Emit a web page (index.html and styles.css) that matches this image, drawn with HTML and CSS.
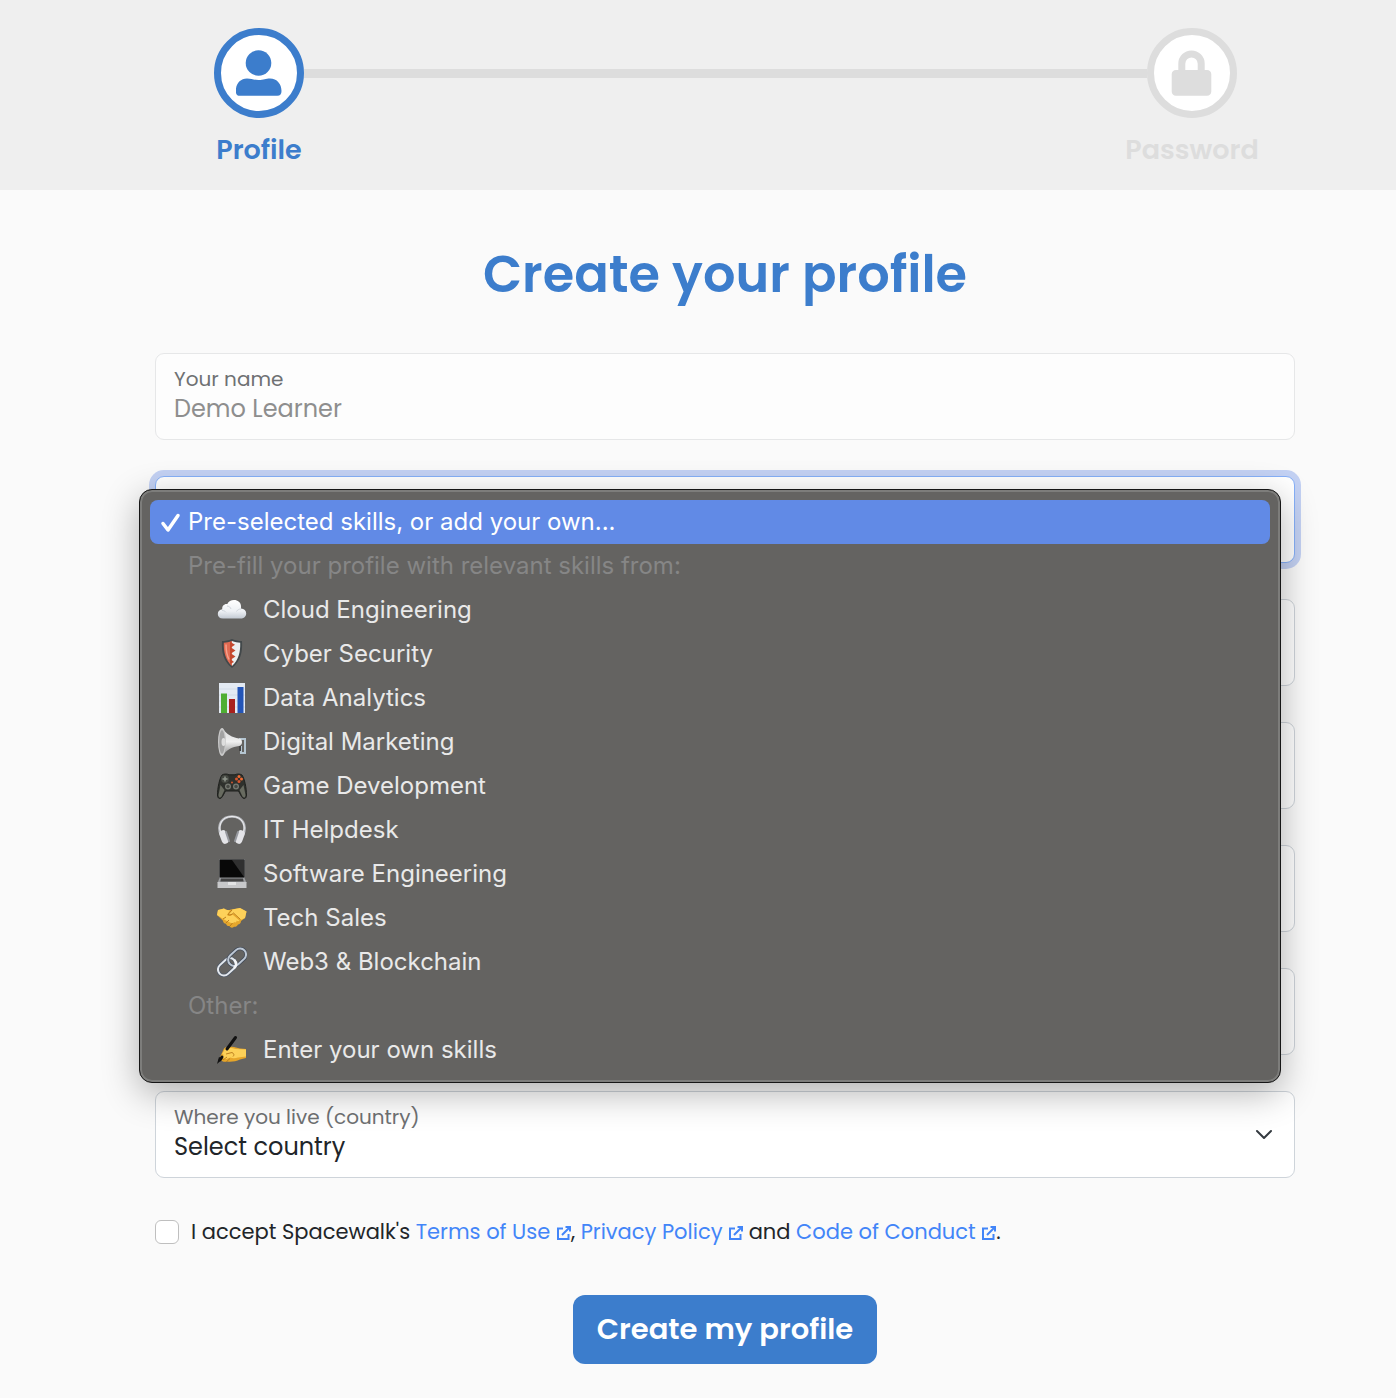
FILE: index.html
```html
<!DOCTYPE html>
<html lang="en">
<head>
    <meta charset="UTF-8">
    <meta name="viewport" content="width=device-width, initial-scale=1.0">
    <title>Create your profile</title>

    <link rel="stylesheet" href="styles.css">
</head>
<body>
    <header class="top">
        <ol class="steps">
            <li class="step active">
                <span class="step_circle">
                    <svg width="46" height="46" viewBox="0 0 46 46" fill="currentColor">
                        <circle cx="22.500" cy="13" r="12.800"/>
                        <path d="M11 28.500c4.500 0 6 1.500 11.500 1.500S29.500 28.500 34 28.500c7 0 11.500 5.500 11.500 12.500 0 3-1.200 4.800-4.200 4.800H4C1 45.800-.2 44-.2 41 -.2 34 4 28.500 11 28.500z"/>
                    </svg>
                </span>
                <span class="step_name">Profile</span>
            </li>
            <li class="step_line" role="presentation"></li>
            <li class="step">
                <span class="step_circle">
                    <svg width="46" height="46" viewBox="0 0 46 46" fill="currentColor">
                        <path fill-rule="evenodd" d="M7 20h2.300v-6.300a13.200 13.200 0 0 1 26.400 0V20H38c2.500 0 4.300 1.800 4.300 4.300v17.200c0 2.500-1.800 4.300-4.300 4.300H7c-2.500 0-4.300-1.800-4.300-4.300V24.300C2.700 21.800 4.500 20 7 20zm9.300 0h12.400v-6.300a6.200 6.200 0 0 0-12.400 0z"/>
                    </svg>
                </span>
                <span class="step_name">Password</span>
            </li>
        </ol>
    </header>

    <main class="content">
        <h1 class="title">Create your profile</h1>

        <form class="profile_form">
            <div class="field disabled">
                <label for="name">Your name</label>
                <input type="text" id="name" value="Demo Learner" disabled>
            </div>

            <div class="field focused">
                <select id="skills" aria-label="Skills">
                    <option>Pre-selected skills, or add your own...</option>
                </select>

                <!-- open skills list -->
                <div class="menu">
                    <button type="button" class="menu_item selected">
                        <svg class="check" width="22" height="22" viewBox="0 0 22 22" fill="none" stroke="currentColor" stroke-width="3.500" stroke-linecap="round" stroke-linejoin="round"><path d="M4 12.500l5 6.500 10-14.500"/></svg>
                        Pre-selected skills, or add your own...
                    </button>
                    <div class="menu_group">Pre-fill your profile with relevant skills from:</div>
                    <button type="button" class="menu_item sub">
                        <svg width="30" height="30" viewBox="0 0 30 30">
                            <defs><linearGradient id="cloud" x1="0" y1="0" x2="0" y2="1"><stop offset="0" stop-color="#fff"/><stop offset=".6" stop-color="#eef1f5"/><stop offset="1" stop-color="#c3cad3"/></linearGradient></defs>
                            <path fill="url(#cloud)" d="M6 23.500C2.500 23.500.8 21.500.8 19c0-2.700 2-4.500 4.500-4.700-.6-3.300 2-5.800 5-5.300C11.500 6.500 14 5 17 5c3.800 0 6.800 2.500 7 6 .1.800.1 1.600 0 2.500 3.200.2 5.200 2.300 5.200 5s-2.200 5-5.200 5z"/>
                            <path fill="none" stroke="#cfd5dc" d="M10 11c2 .2 3.500 1.200 4 3M24 14c-2 0-3.500.8-4.500 2.500M5 15.500c1.600 0 3 .5 4 1.800"/>
                        </svg>
                        Cloud Engineering
                    </button>
                    <button type="button" class="menu_item sub">
                        <svg width="30" height="30" viewBox="0 0 30 30">
                            <path fill="#42484a" d="M15 0c3.500 1.500 7 2 10 2 .8 11-1.500 20.500-10 27C6.500 22.500 4.200 13 5 2c3 0 6.500-.5 10-2z"/>
                            <path fill="#e06a52" d="M15 2c-3 1.100-5.500 1.600-8.200 1.700C6.500 13 8.500 21 15 27z"/>
                            <path fill="#eceff0" d="M15 2c3 1.100 5.500 1.600 8.200 1.700C23.500 13 21.500 21 15 27z"/>
                            <path fill="#c4492f" d="M13 2.700l5 3-4 2.800 4.500 3-4.500 3 4.500 3-4.500 3 3 2.500-4 2z"/>
                            <path fill="none" stroke="#f5a08c" stroke-width="1.500" d="M9 5.500c0 6 .8 10.500 3 15"/>
                        </svg>
                        Cyber Security
                    </button>
                    <button type="button" class="menu_item sub">
                        <svg width="30" height="30" viewBox="0 0 30 30">
                            <path fill="#e3eaf3" d="M2 0h26v30H2z"/>
                            <path stroke="#d3dce8" d="M2 6h26M2 12h26M2 18h26M2 24h26"/>
                            <path fill="#4eae32" d="M4 10.500h6V30H4z"/>
                            <path fill="#a9211e" d="M12 16h6v14h-6z"/>
                            <path fill="#2355b8" d="M20.500 4h6v26h-6z"/>
                        </svg>
                        Data Analytics
                    </button>
                    <button type="button" class="menu_item sub">
                        <svg width="30" height="30" viewBox="0 0 30 30">
                            <defs><linearGradient id="horn" x1="0" y1="0" x2="0" y2="1"><stop offset="0" stop-color="#d9d9d9"/><stop offset=".5" stop-color="#f0f0f0"/><stop offset="1" stop-color="#8e8e8e"/></linearGradient></defs>
                            <path fill="none" stroke="#b4c5d1" stroke-width="2" d="M22 12h6v14h-4v-7"/>
                            <path fill="#444" d="M22 16h2v8h-2z"/>
                            <path fill="url(#horn)" d="M5 1c5 6.500 10 9.500 17 10.500 1.500 0 3 1 3 3.500s-1.200 3.800-3 4c-7 .8-11.500 3.500-16.500 9.500z"/>
                            <ellipse cx="5" cy="15" rx="4" ry="14" fill="#cacaca"/>
                            <ellipse cx="5" cy="15" rx="2.800" ry="12" fill="#a2a2a2"/>
                            <ellipse cx="6.500" cy="15" rx="2" ry="4" fill="#dedede"/>
                        </svg>
                        Digital Marketing
                    </button>
                    <button type="button" class="menu_item sub">
                        <svg width="30" height="30" viewBox="0 0 30 30">
                            <path fill="#2f312d" stroke="#1f211e" d="M5 4c2-1.300 5-1.300 7-.2h6c2-1.100 5-1.100 7 .2 2.500 3.500 4.500 13 4.500 20 0 4-3 4.700-5 1.500L21.500 20h-13l-3 5.500c-2 3.200-5 2.500-5-1.500C.5 17 2.500 7.500 5 4z"/>
                            <path fill="#686b60" d="M3.500 14l4 5-3 6.500c-1.500 2-3 1-3-1.500zM26.500 14l-4 5 3 6.500c1.500 2 3 1 3-1.500z"/>
                            <circle cx="8" cy="8" r="4" fill="#454842"/>
                            <path stroke="#91968d" stroke-width="1.500" d="M8 5.500v5M5.500 8h5"/>
                            <circle cx="22" cy="5.500" r="1.500" fill="#ef6b32"/><circle cx="19.500" cy="8" r="1.500" fill="#d9542b"/><circle cx="24.500" cy="8" r="1.500" fill="#ef6b32"/><circle cx="22" cy="10.500" r="1.500" fill="#d9542b"/>
                            <circle cx="15" cy="11.500" r="1" fill="#cf5730"/>
                            <circle cx="11" cy="15.500" r="3" fill="#777a72"/><circle cx="19" cy="15.500" r="3" fill="#777a72"/>
                            <circle cx="11" cy="15.500" r="1.700" fill="#474944"/><circle cx="19" cy="15.500" r="1.700" fill="#474944"/>
                        </svg>
                        Game Development
                    </button>
                    <button type="button" class="menu_item sub">
                        <svg width="30" height="30" viewBox="0 0 30 30">
                            <path fill="none" stroke="#b9bbc0" stroke-width="2.500" d="M4 20C-.5 10 5 1.500 15 1.500S30.500 10 26 20"/>
                            <path fill="none" stroke="#efeff2" d="M3.500 17C1 9 5.500 1.500 15 1.500S29 9 26.500 17"/>
                            <rect x="3.500" y="15" width="7" height="14" rx="3.500" fill="#e4e4e8" transform="rotate(-20 7 22)"/>
                            <rect x="19.500" y="15" width="7" height="14" rx="3.500" fill="#e4e4e8" transform="rotate(20 23 22)"/>
                            <path stroke="#96989e" stroke-width="2" stroke-linecap="round" d="M9 17l3 9M21 17l-3 9"/>
                        </svg>
                        IT Helpdesk
                    </button>
                    <button type="button" class="menu_item sub">
                        <svg width="30" height="30" viewBox="0 0 30 30">
                            <path fill="#8a8c8e" d="M2 0h26v19H2z"/>
                            <path fill="#080808" d="M2.500.5h25v18h-25z"/>
                            <path fill="#303030" d="M15 1h12v17z"/>
                            <path fill="#9b9da0" d="M2.500 19h25l2 5H.5z"/>
                            <path fill="#444" d="M4 19.500h22l.7 3H3.300z"/>
                            <path fill="#c7c8ca" d="M.5 23h29v6H.5z"/>
                            <path fill="#e3e4e5" d="M11 23h8v3h-8z"/>
                        </svg>
                        Software Engineering
                    </button>
                    <button type="button" class="menu_item sub">
                        <svg width="30" height="30" viewBox="0 0 30 30">
                            <path fill="#e6a72c" d="M1 7l6-1.500c2 1.500 4 2 7 1l9-1.500 6.500 3.500L28 15l-4 3c0 2-1.500 3.500-3 3.500-1 2-2.500 2.500-4 2.200-1.500 1.600-3.500 1.300-4.500-.7-2 .2-3-.8-3.500-2.300-2-.2-3-1.500-3-3L0 12z"/>
                            <path fill="#fdd15a" d="M1 7l6-1.500c2 1.500 4 2 6 1.500l-3 5c1.500 2 4 1 5.500-.5l7 6c-1 1-2 1-3 0 .5 1.500-1 2.500-2.500 1.500-.5 1.500-2.500 1.500-4 .5l-6-3L0 12zM23 5l6.500 3.500L28 15l-4.500 2-7-6.500c-2 1-4 1.500-5 .5l4-4.500z"/>
                            <path fill="none" stroke="#bc7d1d" stroke-width="1" d="M15 7l-4 4.500c2 1 4 0 5.500-1.500l7 6.500M6 16l3-2M9 20l3-3M13 23l2.500-3"/>
                        </svg>
                        Tech Sales
                    </button>
                    <button type="button" class="menu_item sub">
                        <svg width="30" height="30" viewBox="0 0 30 30" fill="none">
                            <g transform="rotate(-43 15 15)">
                                <rect x="-2" y="9" width="20" height="12" rx="6" stroke="#525b68" stroke-width="3.500"/>
                                <rect x="-2" y="9" width="20" height="12" rx="6" stroke="#e3e8ee" stroke-width="2"/>
                                <rect x="12" y="9" width="20" height="12" rx="6" stroke="#434b58" stroke-width="3.500"/>
                                <rect x="12" y="9" width="20" height="12" rx="6" stroke="#bdc8d5" stroke-width="2"/>
                                <path d="M12 21c4 0 6-2.500 6-6" stroke="#f4f5f7" stroke-width="2.500"/>
                            </g>
                        </svg>
                        Web3 &amp; Blockchain
                    </button>
                    <div class="menu_group">Other:</div>
                    <button type="button" class="menu_item sub">
                        <svg width="30" height="30" viewBox="0 0 30 30">
                            <path fill="#e6a62a" d="M3 22l4-8.500c2.500-2.500 7-1.500 10-1.500l6 1.500 6 .5v9l-6 1.500c-4 2-9 2.500-13 2-4 1-7-1-7-4.500z"/>
                            <path fill="#fdd158" d="M5 19l3-5c3-2.500 8-1 11 0l10 .5v7l-8 1c-3 1-5.500 1-7.500 0L9 24c-3 0-4-2.500-2-4z"/>
                            <path fill="none" stroke="#bd8220" d="M6 25l4-3M9 27l4-3.500M9 19l6-1.500c2 1 2.500 2.500 1 4"/>
                            <path stroke="#111" stroke-width="3" stroke-linecap="round" d="M18.500 2.500L10 14M5 22l-2 3"/>
                            <path fill="#111" d="M2 22l3.500 2L0 29z"/>
                        </svg>
                        Enter your own skills
                    </button>
                </div>
            </div>

            <div class="field"><input type="text" aria-label="Current role"></div>
            <div class="field"><input type="text" aria-label="Company"></div>
            <div class="field"><input type="text" aria-label="Education"></div>
            <div class="field"><input type="text" aria-label="City"></div>

            <div class="field">
                <label for="country">Where you live (country)</label>
                <select id="country">
                    <option>Select country</option>
                </select>
                <svg class="chevron" width="18" height="12" viewBox="0 0 18 12" fill="none" stroke="currentColor" stroke-width="2" stroke-linecap="round" stroke-linejoin="round"><path d="M2 2l7 7 7-7"/></svg>
            </div>

            <div class="terms">
                <input type="checkbox" id="accept">
                <label for="accept">I accept Spacewalk's
                    <a href="#">Terms of Use <svg class="ext" viewBox="0 0 14 14"><path d="M6 2.500H1v10.500h10.500V8M8.500 1H13v4.500M13 1L5 9"/></svg></a>,
                    <a href="#">Privacy Policy <svg class="ext" viewBox="0 0 14 14"><path d="M6 2.500H1v10.500h10.500V8M8.500 1H13v4.500M13 1L5 9"/></svg></a> and
                    <a href="#">Code of Conduct <svg class="ext" viewBox="0 0 14 14"><path d="M6 2.500H1v10.500h10.500V8M8.500 1H13v4.500M13 1L5 9"/></svg></a>.
                </label>
            </div>

            <button type="submit" class="submit">Create my profile</button>
        </form>
    </main>
</body>
</html>
```
FILE: styles.css
```css
* {
    margin: 0;
    padding: 0;
    box-sizing: border-box;
}

body {
    background-color: #fafafa;
    color: #212529;
    font-family: Poppins, Inter, "Open Sans", sans-serif;
}

input, select, button {
    font: inherit;
    color: inherit;
}

/* progress bar */
.top {
    height: 190px;
    padding: 28px 159px 0 214px;
    background-color: #efefef;
}

.steps {
    display: flex;
    list-style: none;
}

.step {
    display: flex;
    flex-direction: column;
    align-items: center;
    width: 90px;
    color: #dddddd;
}

.step.active {
    color: #3c7dcc;
}

.step_circle {
    display: flex;
    justify-content: center;
    align-items: center;
    width: 90px;
    height: 90px;
    border: 7px solid currentColor;
    border-radius: 50%;
    background-color: #fff;
}

.step_name {
    margin-top: 14px;
    font-size: 27px;
    line-height: 36px;
    font-weight: 600;
}

.step_line {
    flex: 1;
    height: 9px;
    margin-top: 41px;
    background-color: #dddddd;
}

/* form */
.content {
    padding: 48px 101px 34px 155px;
}

.title {
    color: #3c7dcc;
    font-size: 51px;
    line-height: 72px;
    font-weight: 600;
    text-align: center;
}

.profile_form {
    display: flex;
    flex-direction: column;
    gap: 36px;
    margin-top: 43px;
}

.field {
    position: relative;
    display: flex;
    flex-direction: column;
    height: 87px;
    padding: 12px 18px;
    border: 1px solid #ced4da;
    border-radius: 9px;
    background-color: #fff;
}

.field label {
    color: #6f7173;
    font-size: 20px;
    line-height: 26px;
}

.field input, .field select {
    width: 100%;
    height: 34px;
    border: 0;
    outline: 0;
    background: transparent;
    font-size: 24px;
    line-height: 34px;
    appearance: none;
}

.field.disabled {
    border-color: #e6e7e8;
    background-color: #fdfdfd;
}

.field.disabled input {
    color: #8e8e8e;
}

.field.focused {
    border-color: #86b0f8;
    box-shadow: 0 0 0 6px #c3d1f3;
    z-index: 1;
}

.field.focused select {
    margin-top: 26px;
}

.chevron {
    position: absolute;
    right: 21px;
    top: 37px;
    color: #343a40;
    pointer-events: none;
}

/* dropdown list */
.menu {
    position: absolute;
    top: 12px;
    left: -17px;
    right: 13px;
    padding: 10px;
    border: 1px solid #161616;
    border-radius: 13px;
    background-color: #646361;
    box-shadow: inset 0 0 0 2px #7d7d7b, 0 10px 36px rgba(0, 0, 0, 0.3);
    color: #e9e9e9;
    font-family: Inter, sans-serif;
    font-size: 24px;
    line-height: 44px;
}

.menu_item {
    display: flex;
    align-items: center;
    gap: 16px;
    width: 100%;
    height: 44px;
    padding-left: 67px;
    border: 0;
    border-radius: 8px;
    background: transparent;
    text-align: left;
}

.menu_item.selected {
    gap: 7px;
    padding-left: 9px;
    background-color: #618ae6;
    color: #fff;
}

.menu_group {
    padding-left: 38px;
    color: #868686;
}

/* terms */
.terms {
    display: flex;
    align-items: center;
    gap: 12px;
    font-size: 21px;
    line-height: 36px;
}

.terms input {
    width: 24px;
    height: 24px;
    border: 1px solid #bfbfbf;
    border-radius: 6px;
    background-color: #fff;
    appearance: none;
}

.terms a {
    color: #4285f8;
    text-decoration: none;
}

.ext {
    width: 14px;
    height: 14px;
    margin-left: 1px;
    fill: none;
    stroke: currentColor;
    stroke-width: 2;
    vertical-align: -1px;
}

.submit {
    align-self: center;
    height: 69px;
    margin-top: 9px;
    padding: 0 24px;
    border: 0;
    border-radius: 12px;
    background-color: #3c7dcc;
    color: #fff;
    font-size: 29px;
    font-weight: 600;
}
```
